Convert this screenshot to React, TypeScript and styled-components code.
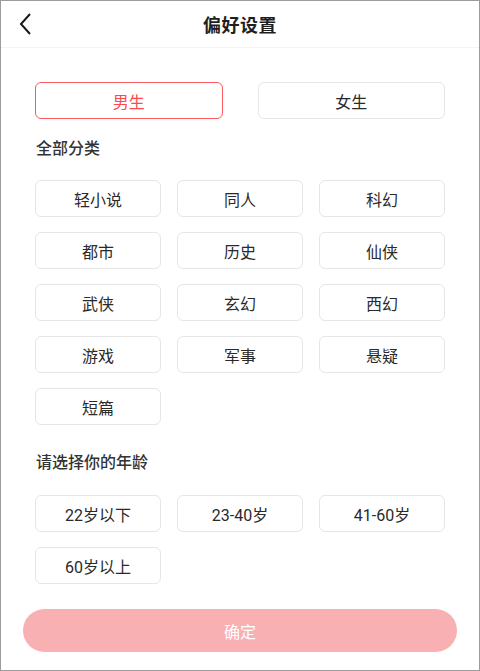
import React, { useState } from "react";
import styled, { createGlobalStyle } from "styled-components";

const GlobalStyle = createGlobalStyle`
  html, body {
    margin: 0;
    padding: 0;
    background: #ffffff;
  }
  * {
    box-sizing: border-box;
  }
  body {
    font-family: Roboto, "Noto Sans CJK SC", sans-serif;
  }
`;

const Frame = styled.div`
  width: 480px;
  height: 671px;
  border: 1px solid #9c9c9c;
  background: #fff;
  display: flex;
  flex-direction: column;
`;

const Header = styled.div`
  height: 47px;
  border-bottom: 1px solid #f3f3f3;
  display: flex;
  align-items: center;
  justify-content: center;
  position: relative;
`;

const BackButton = styled.button`
  position: absolute;
  left: 10px;
  top: 7px;
  width: 30px;
  height: 32px;
  border: none;
  background: none;
  padding: 0;
  display: flex;
  align-items: center;
  justify-content: center;
`;

const Title = styled.h1`
  margin: 0;
  font-family: "Noto Sans CJK SC", sans-serif;
  font-size: 18px;
  font-weight: 700;
  color: #1f1f1f;
  letter-spacing: 0.5px;
`;

const Content = styled.div`
  padding: 34px 34px 0;
  display: flex;
  flex-direction: column;
`;

const GenderRow = styled.div`
  display: grid;
  grid-template-columns: 1fr 1fr;
  column-gap: 35px;
`;

const Chip = styled.button<{ $active?: boolean }>`
  height: 37px;
  border-radius: 6px;
  border: 1.5px solid ${(p) => (p.$active ? "#fb5a5f" : "#e6e6e6")};
  background: #fff;
  color: ${(p) => (p.$active ? "#fb4a50" : "#2a2a2a")};
  font-family: Roboto, "Noto Sans CJK SC", sans-serif;
  font-size: 16px;
  padding: 0;
  display: flex;
  align-items: center;
  justify-content: center;
`;

const SectionLabel = styled.div<{ $top: number; $bottom: number }>`
  font-family: "Noto Sans CJK SC", sans-serif;
  font-size: 16px;
  font-weight: 500;
  color: #333;
  line-height: 20px;
  margin: ${(p) => p.$top}px 0 ${(p) => p.$bottom}px 1px;
`;

const Grid = styled.div`
  display: grid;
  grid-template-columns: repeat(3, 126px);
  column-gap: 16px;
  row-gap: 15px;
`;

const Footer = styled.div`
  padding: 25px 22px 0;
`;

const ConfirmButton = styled.button`
  width: 100%;
  height: 43px;
  border: none;
  border-radius: 22px;
  background: #f8b0b2;
  color: #fff;
  font-family: "Noto Sans CJK SC", sans-serif;
  font-size: 16px;
`;

const categories = [
  "轻小说", "同人", "科幻",
  "都市", "历史", "仙侠",
  "武侠", "玄幻", "西幻",
  "游戏", "军事", "悬疑",
  "短篇",
];

const ages = ["22岁以下", "23-40岁", "41-60岁", "60岁以上"];

export default function App() {
  const [gender, setGender] = useState("男生");

  return (
    <>
      <GlobalStyle />
      <Frame>
        <Header>
          <BackButton aria-label="返回">
            <svg width="16" height="24" viewBox="0 0 16 24">
              <path d="M12 2 L3 12 L12 22" fill="none" stroke="#1a1a1a" strokeWidth="2" />
            </svg>
          </BackButton>
          <Title>偏好设置</Title>
        </Header>
        <Content>
          <GenderRow>
            {["男生", "女生"].map((g) => (
              <Chip key={g} $active={gender === g} onClick={() => setGender(g)}>
                {g}
              </Chip>
            ))}
          </GenderRow>
          <SectionLabel $top={18} $bottom={23}>全部分类</SectionLabel>
          <Grid>
            {categories.map((c) => (
              <Chip key={c}>{c}</Chip>
            ))}
          </Grid>
          <SectionLabel $top={26} $bottom={24}>请选择你的年龄</SectionLabel>
          <Grid>
            {ages.map((a) => (
              <Chip key={a}>{a}</Chip>
            ))}
          </Grid>
        </Content>
        <Footer>
          <ConfirmButton>确定</ConfirmButton>
        </Footer>
      </Frame>
    </>
  );
}
